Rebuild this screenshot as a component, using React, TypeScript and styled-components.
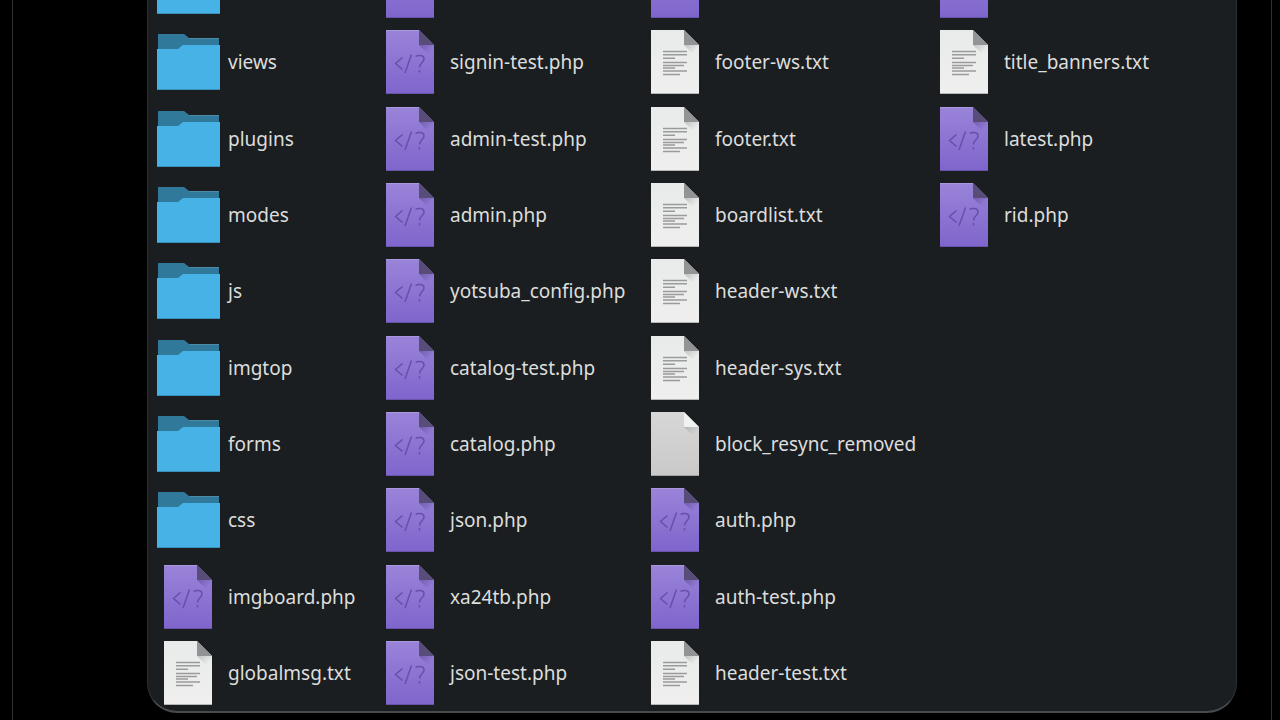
import React from "react";
import styled, { createGlobalStyle } from "styled-components";

type Kind = "folder" | "php" | "text" | "blank";
interface Entry {
  kind: Kind;
  name?: string;
}

const GlobalStyle = createGlobalStyle`
  *, *::before, *::after { box-sizing: border-box; }
  body { margin: 0; background: #000; }
`;

const Screen = styled.div`
  display: flex;
  align-items: flex-end;
  height: 100vh;
  overflow: hidden;
  padding: 0 8px 0 12px;
  background: #000;
  font-family: "Noto Sans", "Open Sans", sans-serif;
`;

const Frame = styled.main`
  flex: 1;
  min-width: 0;
  padding: 0 34px 7px 134px;
  border-left: 1px solid #303030;
  border-right: 1px solid #303030;
`;

const Panel = styled.section`
  border: 1px solid #2c2f31;
  border-bottom: 2px solid #484a4b;
  border-radius: 30px;
  background: #1b1e20;
  padding: 0 8px;
`;

const Columns = styled.div`
  display: grid;
  grid-template-columns: 222px 265px 289px minmax(0, 1fr);
  height: calc(100vh + 43px);
`;

const FileList = styled.ul`
  display: grid;
  grid-template-rows: repeat(10, 1fr);
  margin: 0;
  padding: 0;
  list-style: none;
`;

const FileItem = styled.li`
  display: flex;
  align-items: center;
  gap: 8px;
`;

const FileName = styled.span`
  color: #dcdddd;
  font-size: 19px;
  line-height: 28px;
  white-space: nowrap;
`;

const Icon = styled.svg`
  display: block;
  flex: none;
  width: 64px;
  height: 64px;
`;

const Defs = styled.svg`
  position: absolute;
  width: 0;
  height: 0;
`;

const PAGE = "M8 0H41L56 15V64H8Z";

function FolderIcon() {
  return (
    <Icon viewBox="0 0 64 64" aria-hidden="true">
      <path d="M2 4H28L33 8H63V30H2Z" fill="#31799a" />
      <path d="M33 8H63V9H34Z" fill="#4c8ba8" />
      <path d="M1 19H22L27 15H64V60H1Z" fill="#47b2e5" />
      <path d="M1 59H64V60H1Z" fill="#3990bb" />
    </Icon>
  );
}

function PhpIcon() {
  return (
    <Icon viewBox="0 0 64 64" aria-hidden="true">
      <path d={PAGE} fill="url(#violet)" />
      <path d="M8 0H41V1H8Z" fill="#aa98df" />
      <path d="M8 63H56V64H8Z" fill="#6852ac" />
      <path d="M41 15H56V30Z" fill="url(#fold-shadow)" />
      <path d="M41 0L56 15H41Z" fill="#584c78" />
      <g fill="none" stroke="#6650a9" strokeWidth="1.5">
        <path d="M24.500 27.500L17.500 33.500L24.500 39.500" />
        <path d="M33.500 24.500L27 43" />
        <path d="M37.500 26.500C39.500 25 46 24.500 46 29C46 33 41.500 32.500 41.500 37.500" />
        <path d="M41.500 40V42.500" />
      </g>
    </Icon>
  );
}

function TextIcon() {
  return (
    <Icon viewBox="0 0 64 64" aria-hidden="true">
      <path d={PAGE} fill="url(#paper)" />
      <path d="M8 63H56V64H8Z" fill="#b4b5b5" />
      <path d="M41 15H56V30Z" fill="url(#paper-shadow)" />
      <path d="M41 0L56 15H41Z" fill="#929394" />
      <path
        d="M20 21.500H44M20 24.800H44M20 28.200H32M20 32.500H44M20 35.500H41M20 38H32M20 41H44M20 44.500H37"
        stroke="#9a9b9b"
        strokeWidth="1.5"
      />
    </Icon>
  );
}

function BlankIcon() {
  return (
    <Icon viewBox="0 0 64 64" aria-hidden="true">
      <path d={PAGE} fill="url(#grey)" />
      <path d="M8 63H56V64H8Z" fill="#a1a2a2" />
      <path d="M41 15H56V30Z" fill="url(#paper-shadow)" />
      <path d="M41 0L56 15H41Z" fill="#f0f1f1" />
    </Icon>
  );
}

const icons: Record<Kind, () => React.JSX.Element> = {
  folder: FolderIcon,
  php: PhpIcon,
  text: TextIcon,
  blank: BlankIcon,
};

const folder = (name?: string): Entry => ({ kind: "folder", name });
const php = (name?: string): Entry => ({ kind: "php", name });
const text = (name: string): Entry => ({ kind: "text", name });

const columns: Entry[][] = [
  [
    folder(),
    folder("views"),
    folder("plugins"),
    folder("modes"),
    folder("js"),
    folder("imgtop"),
    folder("forms"),
    folder("css"),
    php("imgboard.php"),
    text("globalmsg.txt"),
  ],
  [
    php(),
    php("signin-test.php"),
    php("admin-test.php"),
    php("admin.php"),
    php("yotsuba_config.php"),
    php("catalog-test.php"),
    php("catalog.php"),
    php("json.php"),
    php("xa24tb.php"),
    php("json-test.php"),
  ],
  [
    php(),
    text("footer-ws.txt"),
    text("footer.txt"),
    text("boardlist.txt"),
    text("header-ws.txt"),
    text("header-sys.txt"),
    { kind: "blank", name: "block_resync_removed" },
    php("auth.php"),
    php("auth-test.php"),
    text("header-test.txt"),
  ],
  [php(), text("title_banners.txt"), php("latest.php"), php("rid.php")],
];

export default function App() {
  return (
    <Screen>
      <GlobalStyle />
      <Defs aria-hidden="true">
        <defs>
          <linearGradient id="violet" x1="0" y1="0" x2="0" y2="1">
            <stop offset="0" stopColor="#9a84d9" />
            <stop offset="1" stopColor="#7e65cc" />
          </linearGradient>
          <linearGradient id="paper" x1="0" y1="0" x2="0" y2="1">
            <stop offset="0" stopColor="#e9eaea" />
            <stop offset="1" stopColor="#efefef" />
          </linearGradient>
          <linearGradient id="grey" x1="0" y1="0" x2="0" y2="1">
            <stop offset="0" stopColor="#d6d7d6" />
            <stop offset="1" stopColor="#c8c9c8" />
          </linearGradient>
          <linearGradient id="fold-shadow" x1="0" y1="0" x2="1" y2="1">
            <stop offset="0" stopColor="#4b3a82" stopOpacity="0.5" />
            <stop offset="0.6" stopColor="#4b3a82" stopOpacity="0" />
          </linearGradient>
          <linearGradient id="paper-shadow" x1="0" y1="0" x2="1" y2="1">
            <stop offset="0" stopColor="#808080" stopOpacity="0.4" />
            <stop offset="0.6" stopColor="#808080" stopOpacity="0" />
          </linearGradient>
        </defs>
      </Defs>
      <Frame>
        <Panel>
          <Columns>
            {columns.map((entries, column) => (
              <FileList key={column}>
                {entries.map((entry, row) => {
                  const EntryIcon = icons[entry.kind];
                  return (
                    <FileItem key={row}>
                      <EntryIcon />
                      {entry.name && <FileName>{entry.name}</FileName>}
                    </FileItem>
                  );
                })}
              </FileList>
            ))}
          </Columns>
        </Panel>
      </Frame>
    </Screen>
  );
}
